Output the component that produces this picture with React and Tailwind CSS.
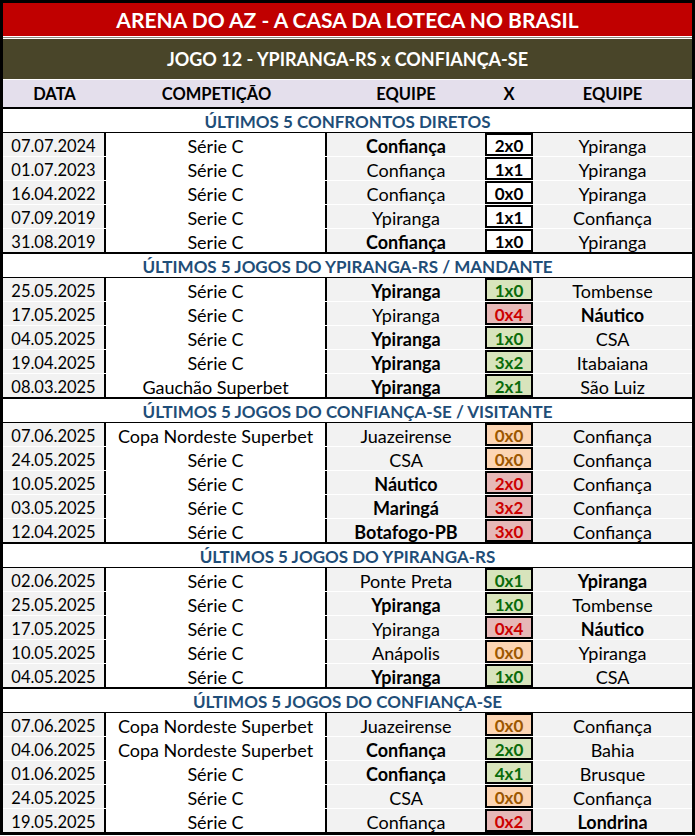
const sections = [
  {
    title: 'ÚLTIMOS 5 CONFRONTOS DIRETOS',
    rows: [
      ['07.07.2024', 'Série C', 'Confiança', '2x0', 'Ypiranga', 'h', 'n'],
      ['01.07.2023', 'Série C', 'Confiança', '1x1', 'Ypiranga', '', 'n'],
      ['16.04.2022', 'Série C', 'Confiança', '0x0', 'Ypiranga', '', 'n'],
      ['07.09.2019', 'Serie C', 'Ypiranga', '1x1', 'Confiança', '', 'n'],
      ['31.08.2019', 'Serie C', 'Confiança', '1x0', 'Ypiranga', 'h', 'n'],
    ],
  },
  {
    title: 'ÚLTIMOS 5 JOGOS DO YPIRANGA-RS / MANDANTE',
    rows: [
      ['25.05.2025', 'Série C', 'Ypiranga', '1x0', 'Tombense', 'h', 'w'],
      ['17.05.2025', 'Série C', 'Ypiranga', '0x4', 'Náutico', 'a', 'l'],
      ['04.05.2025', 'Série C', 'Ypiranga', '1x0', 'CSA', 'h', 'w'],
      ['19.04.2025', 'Série C', 'Ypiranga', '3x2', 'Itabaiana', 'h', 'w'],
      ['08.03.2025', 'Gauchão Superbet', 'Ypiranga', '2x1', 'São Luiz', 'h', 'w'],
    ],
  },
  {
    title: 'ÚLTIMOS 5 JOGOS DO CONFIANÇA-SE / VISITANTE',
    rows: [
      ['07.06.2025', 'Copa Nordeste Superbet', 'Juazeirense', '0x0', 'Confiança', '', 'd'],
      ['24.05.2025', 'Série C', 'CSA', '0x0', 'Confiança', '', 'd'],
      ['10.05.2025', 'Série C', 'Náutico', '2x0', 'Confiança', 'h', 'l'],
      ['03.05.2025', 'Série C', 'Maringá', '3x2', 'Confiança', 'h', 'l'],
      ['12.04.2025', 'Série C', 'Botafogo-PB', '3x0', 'Confiança', 'h', 'l'],
    ],
  },
  {
    title: 'ÚLTIMOS 5 JOGOS DO YPIRANGA-RS',
    rows: [
      ['02.06.2025', 'Série C', 'Ponte Preta', '0x1', 'Ypiranga', 'a', 'w'],
      ['25.05.2025', 'Série C', 'Ypiranga', '1x0', 'Tombense', 'h', 'w'],
      ['17.05.2025', 'Série C', 'Ypiranga', '0x4', 'Náutico', 'a', 'l'],
      ['10.05.2025', 'Série C', 'Anápolis', '0x0', 'Ypiranga', '', 'd'],
      ['04.05.2025', 'Série C', 'Ypiranga', '1x0', 'CSA', 'h', 'w'],
    ],
  },
  {
    title: 'ÚLTIMOS 5 JOGOS DO CONFIANÇA-SE',
    rows: [
      ['07.06.2025', 'Copa Nordeste Superbet', 'Juazeirense', '0x0', 'Confiança', '', 'd'],
      ['04.06.2025', 'Copa Nordeste Superbet', 'Confiança', '2x0', 'Bahia', 'h', 'w'],
      ['01.06.2025', 'Série C', 'Confiança', '4x1', 'Brusque', 'h', 'w'],
      ['24.05.2025', 'Série C', 'CSA', '0x0', 'Confiança', '', 'd'],
      ['19.05.2025', 'Série C', 'Confiança', '0x2', 'Londrina', 'a', 'l'],
    ],
  },
];

const scoreStyle = {
  n: 'bg-white text-black',
  w: 'bg-[#d8e4bc] text-[#0a6b0a]',
  l: 'bg-[#e6b8b7] text-[#cc0000]',
  d: 'bg-[#fcd5b4] text-[#9c5700]',
};

function Row({ row, last }) {
  const [date, comp, home, score, away, bold, res] = row;
  return (
    <div className={`flex h-[23px] text-[18px] ${last ? '' : 'mb-px'}`}>
      <div className="w-[103px] bg-[#f2f2f2] border-r-2 border-black flex items-center justify-center pt-[4px] text-[16.5px]">{date}</div>
      <div className="w-[221px] bg-white border-r-2 border-black flex items-center justify-center pt-[2px]">{comp}</div>
      <div className={`w-[158px] bg-[#f2f2f2] flex items-center justify-center pt-[2px] ${bold === 'h' ? 'font-bold' : ''}`}>{home}</div>
      <div className={`w-[48px] border-2 border-black flex items-center justify-center pt-[1px] font-bold text-[17px] ${scoreStyle[res]}`}>{score}</div>
      <div className={`flex-1 bg-[#f2f2f2] flex items-center justify-center pt-[2px] ${bold === 'a' ? 'font-bold' : ''}`}>{away}</div>
    </div>
  );
}

export default function App() {
  return (
    <div className="w-[695px] bg-white font-['Lato','Liberation_Sans',sans-serif] text-[16px] leading-none text-black">
      <div className="border-[3px] border-black">
        <div className="h-[33px] bg-[#c00000] text-white font-bold text-[21px] flex items-center justify-center">
          ARENA DO AZ - A CASA DA LOTECA NO BRASIL
        </div>
        <div className="h-[3px] border-y border-white bg-[#8a8a80]"></div>
        <div className="h-[40px] bg-[#494529] text-white font-bold text-[18px] flex items-center justify-center mb-px">
          JOGO 12 - YPIRANGA-RS x CONFIANÇA-SE
        </div>
        <div className="h-[27px] bg-[#e4dfec] font-bold text-[16.5px] flex items-center pt-[2px]">
          <div className="w-[103px] text-center">DATA</div>
          <div className="w-[221px] text-center">COMPETIÇÃO</div>
          <div className="w-[158px] text-center">EQUIPE</div>
          <div className="w-[48px] text-center">X</div>
          <div className="flex-1 text-center">EQUIPE</div>
        </div>
        {sections.map((s) => (
          <div key={s.title} className="border-t-2 border-black">
            <div className="h-[24px] border-b border-black flex items-center justify-center font-bold text-[17px] text-[#1f4e78] pt-[1px]">
              {s.title}
            </div>
            {s.rows.map((r, i) => (
              <Row key={i} row={r} last={i === 4} />
            ))}
          </div>
        ))}
      </div>
    </div>
  );
}
